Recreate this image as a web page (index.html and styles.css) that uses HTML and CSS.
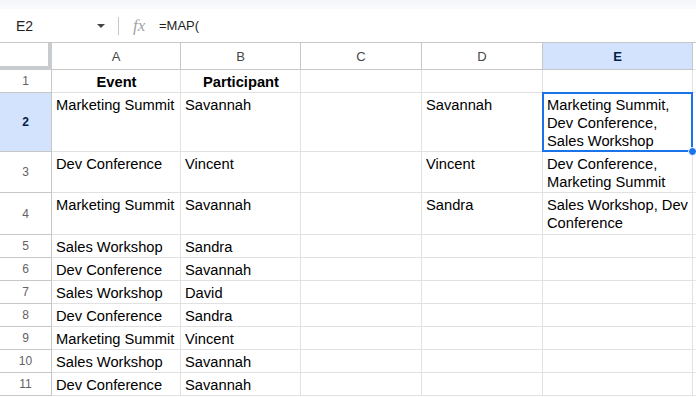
FILE: index.html
```html
<!DOCTYPE html>
<html lang="en">
<head>
    <meta charset="UTF-8">
    <title>Sheet - MAP</title>
    <link rel="stylesheet" href="styles.css">
</head>
<body>
    <div class="top-strip"></div>

    <!-- Строка формул -->
    <div class="formula-bar">
        <div class="name-box">
            <span class="name-box-text">E2</span>
            <span class="caret"></span>
        </div>
        <div class="divider"></div>
        <span class="fx">fx</span>
        <span class="formula">=MAP(</span>
    </div>

    <!-- Таблица -->
    <div class="sheet">
        <div class="corner"></div>
        <div class="col-head">A</div>
        <div class="col-head">B</div>
        <div class="col-head">C</div>
        <div class="col-head">D</div>
        <div class="col-head active">E</div>
        <div class="filler head-filler"></div>

        <div class="row-head">1</div>
        <div class="cell bold center">Event</div>
        <div class="cell bold center">Participant</div>
        <div class="cell"></div>
        <div class="cell"></div>
        <div class="cell"></div>
        <div class="filler"></div>

        <div class="row-head active">2</div>
        <div class="cell">Marketing Summit</div>
        <div class="cell">Savannah</div>
        <div class="cell"></div>
        <div class="cell">Savannah</div>
        <div class="cell selected">Marketing Summit,<br>Dev Conference,<br>Sales Workshop
            <div class="sel-frame"></div>
            <div class="sel-handle"></div>
        </div>
        <div class="filler"></div>

        <div class="row-head">3</div>
        <div class="cell">Dev Conference</div>
        <div class="cell">Vincent</div>
        <div class="cell"></div>
        <div class="cell">Vincent</div>
        <div class="cell">Dev Conference,<br>Marketing Summit</div>
        <div class="filler"></div>

        <div class="row-head">4</div>
        <div class="cell">Marketing Summit</div>
        <div class="cell">Savannah</div>
        <div class="cell"></div>
        <div class="cell">Sandra</div>
        <div class="cell">Sales Workshop, Dev<br>Conference</div>
        <div class="filler"></div>

        <div class="row-head">5</div>
        <div class="cell">Sales Workshop</div>
        <div class="cell">Sandra</div>
        <div class="cell"></div>
        <div class="cell"></div>
        <div class="cell"></div>
        <div class="filler"></div>

        <div class="row-head">6</div>
        <div class="cell">Dev Conference</div>
        <div class="cell">Savannah</div>
        <div class="cell"></div>
        <div class="cell"></div>
        <div class="cell"></div>
        <div class="filler"></div>

        <div class="row-head">7</div>
        <div class="cell">Sales Workshop</div>
        <div class="cell">David</div>
        <div class="cell"></div>
        <div class="cell"></div>
        <div class="cell"></div>
        <div class="filler"></div>

        <div class="row-head">8</div>
        <div class="cell">Dev Conference</div>
        <div class="cell">Sandra</div>
        <div class="cell"></div>
        <div class="cell"></div>
        <div class="cell"></div>
        <div class="filler"></div>

        <div class="row-head">9</div>
        <div class="cell">Marketing Summit</div>
        <div class="cell">Vincent</div>
        <div class="cell"></div>
        <div class="cell"></div>
        <div class="cell"></div>
        <div class="filler"></div>

        <div class="row-head">10</div>
        <div class="cell">Sales Workshop</div>
        <div class="cell">Savannah</div>
        <div class="cell"></div>
        <div class="cell"></div>
        <div class="cell"></div>
        <div class="filler"></div>

        <div class="row-head">11</div>
        <div class="cell">Dev Conference</div>
        <div class="cell">Savannah</div>
        <div class="cell"></div>
        <div class="cell"></div>
        <div class="cell"></div>
        <div class="filler"></div>
    </div>
</body>
</html>
```

FILE: styles.css
```css
* {
    margin: 0;
    padding: 0;
    box-sizing: border-box;
}
body {
    width: 696px;
    height: 397px;
    overflow: hidden;
    background: #fff;
    font-family: "Liberation Sans", Arial, sans-serif;
    color: #000;
}
.top-strip {
    height: 9px;
    background: linear-gradient(#f3f5f8, #fafbfd);
}
/* Строка формул */
.formula-bar {
    height: 34px;
    display: flex;
    align-items: center;
    border-bottom: 1px solid #c7c7c7;
    background: #fff;
}
.name-box {
    width: 118px;
    display: flex;
    align-items: center;
    padding-left: 16px;
}
.name-box-text {
    font-size: 14px;
    color: #1f1f1f;
    flex: 1;
}
.caret {
    width: 0;
    height: 0;
    border-left: 4px solid transparent;
    border-right: 4px solid transparent;
    border-top: 4px solid #444;
    margin-right: 13px;
}
.divider {
    width: 1px;
    height: 18px;
    background: #c7c7c7;
}
.fx {
    font-family: "Liberation Serif", serif;
    font-style: italic;
    font-size: 17px;
    color: #a0a4a8;
    margin-left: 14px;
    width: 26px;
}
.formula {
    font-size: 13px;
    color: #1f1f1f;
}
/* Сетка */
.sheet {
    display: grid;
    grid-template-columns: 52px 129px 120px 121px 121px 150px 1fr;
    grid-template-rows: 27px 23px 59px 41px 42px repeat(7, 23px);
}
.corner {
    border-right: 4px solid #c9cccf;
    border-bottom: 4px solid #c9cccf;
    background: #fff;
}
.col-head {
    display: flex;
    align-items: center;
    justify-content: center;
    font-size: 13px;
    color: #444746;
    border-right: 1px solid #c7c7c7;
    border-bottom: 1px solid #c7c7c7;
    background: #fff;
}
.col-head.active {
    background: #d3e3fd;
    color: #041e49;
    font-weight: bold;
}
.head-filler {
    border-bottom: 1px solid #c7c7c7;
}
.row-head {
    display: flex;
    align-items: center;
    justify-content: center;
    font-size: 12px;
    color: #5f6368;
    border-right: 1px solid #c7c7c7;
    border-bottom: 1px solid #c7c7c7;
    background: #fff;
}
.row-head.active {
    background: #d3e3fd;
    color: #041e49;
    font-weight: bold;
}
.cell {
    padding: 3px 3px 0 4px;
    font-size: 14.7px;
    line-height: 18px;
    white-space: nowrap;
    overflow: hidden;
    border-right: 1px solid #e1e1e1;
    border-bottom: 1px solid #e1e1e1;
}
.cell.bold {
    font-weight: bold;
}
.cell.center {
    text-align: center;
}
.filler {
    border-bottom: 1px solid #e8e8e8;
}
/* Выделенная ячейка */
.cell.selected {
    position: relative;
    overflow: visible;
}
.sel-frame {
    position: absolute;
    top: -1px;
    left: -1px;
    right: -1px;
    bottom: -1px;
    border: 2px solid #1a73e8;
}
.sel-handle {
    position: absolute;
    right: -5px;
    bottom: -5px;
    width: 9px;
    height: 9px;
    border-radius: 50%;
    background: #1a73e8;
    border: 1px solid #fff;
}
```
